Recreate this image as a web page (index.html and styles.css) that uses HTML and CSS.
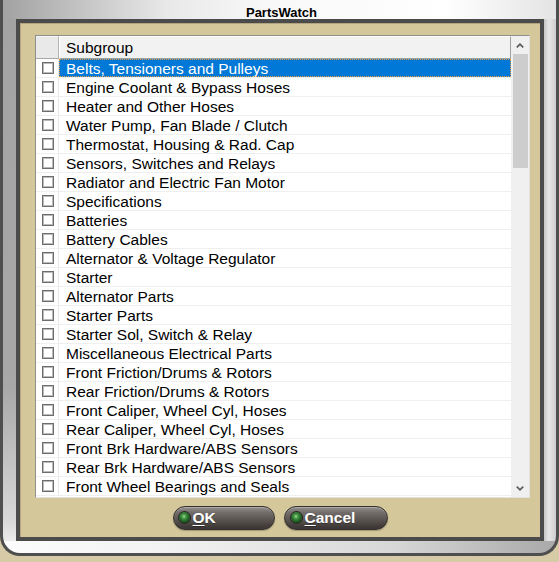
FILE: index.html
```html
<!DOCTYPE html>
<html>
<head>
<meta charset="utf-8">
<link rel="stylesheet" href="styles.css">
</head>
<body>
<div class="window">
  <div class="title">PartsWatch</div>
  <div class="panel">
    <div class="list">
      <div class="list-main">
        <div class="header"><div class="hcheck"></div><div class="hcell">Subgroup</div></div>
        <div class="rows">
          <div class="row selected"><div class="ccell"><span class="cb"></span></div><div class="tcell">Belts, Tensioners and Pulleys</div></div>
          <div class="row"><div class="ccell"><span class="cb"></span></div><div class="tcell">Engine Coolant &amp; Bypass Hoses</div></div>
          <div class="row"><div class="ccell"><span class="cb"></span></div><div class="tcell">Heater and Other Hoses</div></div>
          <div class="row"><div class="ccell"><span class="cb"></span></div><div class="tcell">Water Pump, Fan Blade / Clutch</div></div>
          <div class="row"><div class="ccell"><span class="cb"></span></div><div class="tcell">Thermostat, Housing &amp; Rad. Cap</div></div>
          <div class="row"><div class="ccell"><span class="cb"></span></div><div class="tcell">Sensors, Switches and Relays</div></div>
          <div class="row"><div class="ccell"><span class="cb"></span></div><div class="tcell">Radiator and Electric Fan Motor</div></div>
          <div class="row"><div class="ccell"><span class="cb"></span></div><div class="tcell">Specifications</div></div>
          <div class="row"><div class="ccell"><span class="cb"></span></div><div class="tcell">Batteries</div></div>
          <div class="row"><div class="ccell"><span class="cb"></span></div><div class="tcell">Battery Cables</div></div>
          <div class="row"><div class="ccell"><span class="cb"></span></div><div class="tcell">Alternator &amp; Voltage Regulator</div></div>
          <div class="row"><div class="ccell"><span class="cb"></span></div><div class="tcell">Starter</div></div>
          <div class="row"><div class="ccell"><span class="cb"></span></div><div class="tcell">Alternator Parts</div></div>
          <div class="row"><div class="ccell"><span class="cb"></span></div><div class="tcell">Starter Parts</div></div>
          <div class="row"><div class="ccell"><span class="cb"></span></div><div class="tcell">Starter Sol, Switch &amp; Relay</div></div>
          <div class="row"><div class="ccell"><span class="cb"></span></div><div class="tcell">Miscellaneous Electrical Parts</div></div>
          <div class="row"><div class="ccell"><span class="cb"></span></div><div class="tcell">Front Friction/Drums &amp; Rotors</div></div>
          <div class="row"><div class="ccell"><span class="cb"></span></div><div class="tcell">Rear Friction/Drums &amp; Rotors</div></div>
          <div class="row"><div class="ccell"><span class="cb"></span></div><div class="tcell">Front Caliper, Wheel Cyl, Hoses</div></div>
          <div class="row"><div class="ccell"><span class="cb"></span></div><div class="tcell">Rear Caliper, Wheel Cyl, Hoses</div></div>
          <div class="row"><div class="ccell"><span class="cb"></span></div><div class="tcell">Front Brk Hardware/ABS Sensors</div></div>
          <div class="row"><div class="ccell"><span class="cb"></span></div><div class="tcell">Rear Brk Hardware/ABS Sensors</div></div>
          <div class="row"><div class="ccell"><span class="cb"></span></div><div class="tcell">Front Wheel Bearings and Seals</div></div>
        </div>
      </div>
      <div class="scrollbar">
        <div class="sb-btn"><svg width="8" height="5" viewBox="0 0 8 5"><path d="M0.8 4.4 L4 1.2 L7.2 4.4" fill="none" stroke="#5a5a5a" stroke-width="1.7"/></svg></div>
        <div class="sb-track"><div class="thumb"></div></div>
        <div class="sb-btn"><svg width="8" height="5" viewBox="0 0 8 5"><path d="M0.8 0.6 L4 3.8 L7.2 0.6" fill="none" stroke="#5a5a5a" stroke-width="1.7"/></svg></div>
      </div>
    </div>
    <div class="buttons">
      <button class="btn btn-ok"><span class="led"></span><span class="lbl"><u>O</u>K</span></button>
      <button class="btn btn-cancel"><span class="led"></span><span class="lbl"><u>C</u>ancel</span></button>
    </div>
  </div>
</div>
</body>
</html>
```
FILE: styles.css
```css
html, body {
  margin: 0;
  padding: 0;
}
body {
  width: 559px;
  height: 562px;
  overflow: hidden;
  background: #d6cba6;
  font-family: "Liberation Sans", Arial, sans-serif;
}
.window {
  box-sizing: border-box;
  width: 559px;
  height: 556px;
  border: 3px solid #4f4f4f;
  border-top: 0;
  border-radius: 0 0 20px 20px;
  display: flex;
  flex-direction: column;
  padding: 0 12px 12px 13px;
  background:
    linear-gradient(to right, #a2a2a2 0%, #c4c4c4 14%, #e9e9e9 30%, #f8f8f8 48%, #ffffff 80%, #e4e4e4 100%) left top / 100% 19px no-repeat,
    linear-gradient(to right, #fcfcfc 0%, #f2f2f2 30%, #d8d8d8 70%, #a9a9a9 100%) left bottom / 100% 12px no-repeat,
    linear-gradient(to right, #c6c6c6 0%, #e6e6e6 40%, #cdcdcd 100%) right top / 12px 100% no-repeat,
    linear-gradient(to bottom, #a3a3a3 0%, #a8a8a8 70%, #d8d8d8 94%, #f6f6f6 100%) left top / 13px 100% no-repeat,
    #a6a6a6;
}
.title {
  box-sizing: border-box;
  height: 19px;
  margin: 0 -12px 0 -13px;
  padding: 6px 0 0 4px;
  line-height: 13px;
  font-size: 13px;
  font-weight: bold;
  text-align: center;
  color: #000;
}
.panel {
  flex: 1;
  box-sizing: border-box;
  border: 4px solid #4b4b4b;
  background: #d4c79a;
  box-shadow: inset 1px 1px 0 #b0a57c;
  padding: 12px 10px 0 15px;
  display: flex;
  flex-direction: column;
}
.list {
  box-sizing: border-box;
  height: 463px;
  border: 1px solid;
  border-color: #8f8f8f #e2e2e2 #e2e2e2 #8f8f8f;
  background: #fff;
  display: flex;
}
.list-main {
  flex: 1;
  overflow: hidden;
  display: flex;
  flex-direction: column;
}
.header {
  display: flex;
  height: 23px;
  flex: none;
}
.hcheck {
  box-sizing: border-box;
  width: 23px;
  background: #e9e9e9;
  border-top: 1px solid #f6f6f6;
  border-right: 1px solid #b4b4b4;
  border-bottom: 1px solid #a8a8a8;
}
.hcell {
  flex: 1;
  box-sizing: border-box;
  background: #f2f2f2;
  border-top: 1px solid #fff;
  border-left: 1px solid #fff;
  border-right: 1px solid #a0a0a0;
  border-bottom: 1px solid #a0a0a0;
  padding: 1px 0 0 6px;
  font-size: 15.5px;
  line-height: 20px;
  color: #000;
}
.rows {
  flex: 1;
  overflow: hidden;
}
.row {
  display: flex;
  box-sizing: border-box;
  height: 19px;
  border-bottom: 1px solid #efefef;
}
.ccell {
  box-sizing: border-box;
  width: 23px;
  border-right: 1px solid #e6e6e6;
  padding-left: 6px;
  display: flex;
  align-items: center;
}
.cb {
  box-sizing: border-box;
  width: 12px;
  height: 12px;
  border: 1px solid #6d6d6d;
  box-shadow: inset 0 0 0 1px #bababa;
  background: #fff;
}
.tcell {
  flex: 1;
  padding: 1px 0 0 7px;
  font-size: 15.5px;
  line-height: 17px;
  color: #000;
  white-space: nowrap;
}
.row.selected .tcell {
  background: #0078d7;
  color: #fff;
  outline: 1px dotted #e9a040;
  outline-offset: -1px;
}
.scrollbar {
  width: 18px;
  background: #f0f0f0;
  display: flex;
  flex-direction: column;
}
.sb-btn {
  height: 18px;
  display: flex;
  align-items: center;
  justify-content: center;
}
.sb-track {
  flex: 1;
  padding: 0 1px 0 2px;
}
.thumb {
  height: 114px;
  background: #cdcdcd;
}
.buttons {
  flex: 1;
  margin: 0 -10px 0 -15px;
  display: flex;
  justify-content: center;
  align-items: center;
  gap: 9px;
}
.btn {
  box-sizing: border-box;
  height: 24px;
  border-radius: 12px;
  border: 1px solid #363130;
  background: linear-gradient(to bottom, #94908d 0%, #726d6a 25%, #58534f 60%, #433e3c 85%, #3a3533 100%);
  box-shadow: inset 0 1px 0 rgba(255,255,255,0.25), 0 1px 1px rgba(0,0,0,0.25);
  display: flex;
  align-items: center;
  gap: 3px;
  padding: 0 0 0 5px;
  margin: 0;
  font-family: "Liberation Sans", Arial, sans-serif;
  font-size: 15.5px;
  font-weight: bold;
  color: #fff;
  text-shadow: 0 1px 0 rgba(0,0,0,0.35);
}
.btn-ok { width: 102px; }
.btn-cancel { width: 104px; padding-left: 6px; }
.led {
  width: 11px;
  height: 11px;
  border-radius: 50%;
  background: radial-gradient(circle at 45% 40%, #8fd88f 0%, #3b8a3b 30%, #15491a 70%, #0b2a0d 100%);
  box-shadow: 0 0 0 1px #2b2624;
}
.lbl u {
  text-decoration-thickness: 1px;
  text-underline-offset: 2px;
}
```
